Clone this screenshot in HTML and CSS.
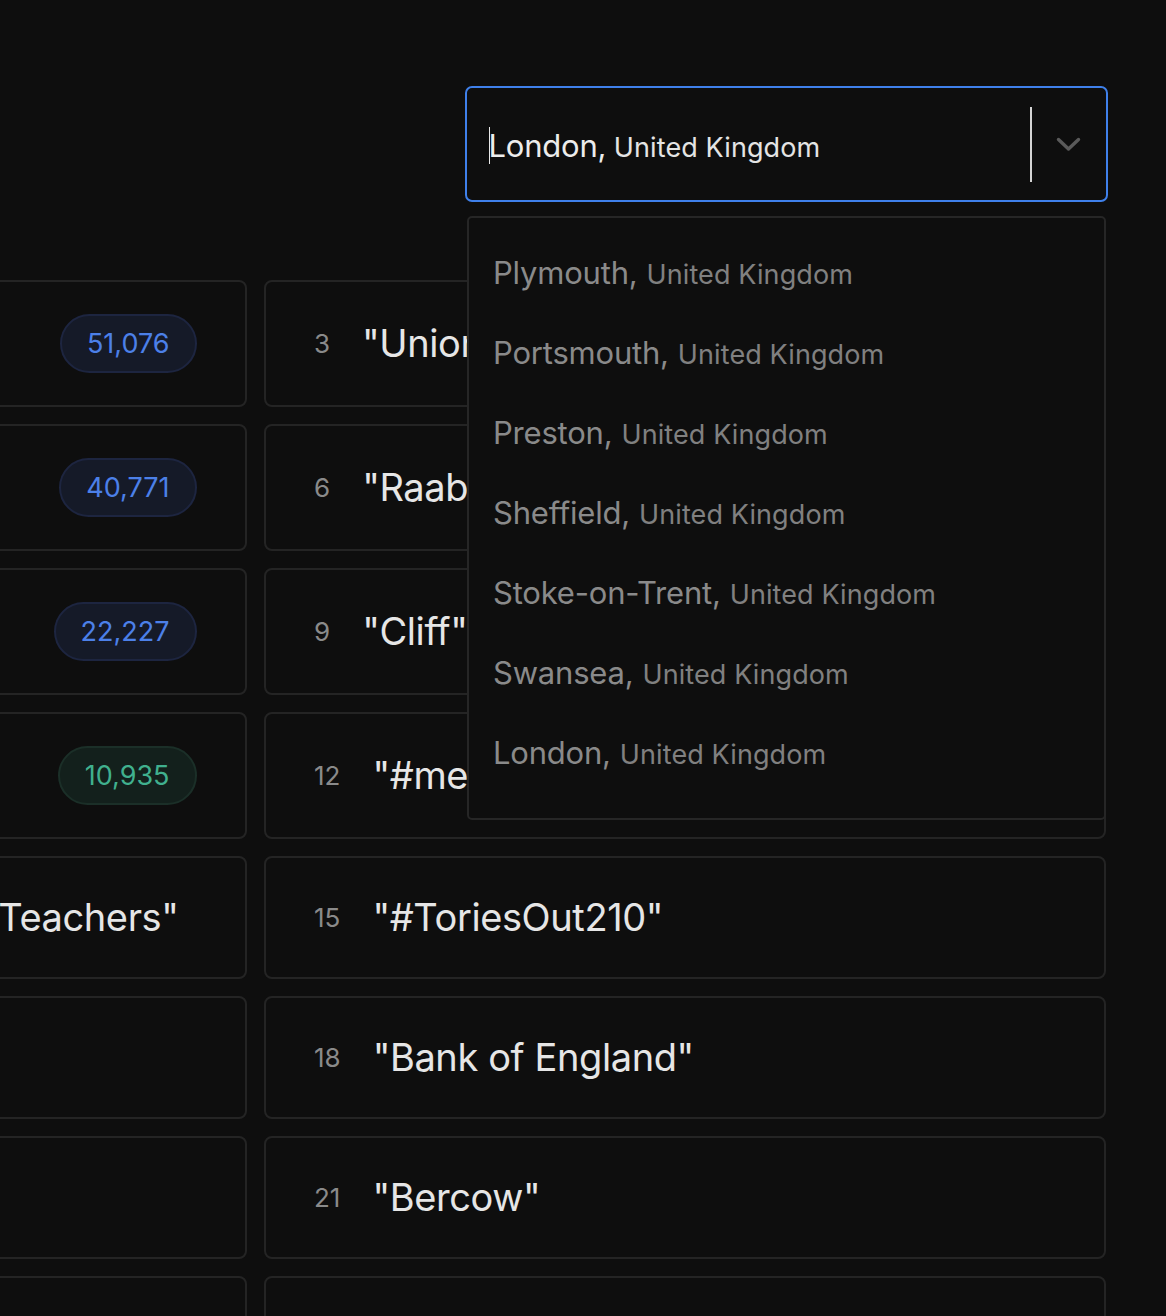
FILE: index.html
```html
<!DOCTYPE html>
<html lang="en">
<head>
<meta charset="utf-8">
<title>Trending terms</title>
<link rel="stylesheet" href="styles.css">
</head>
<body>
<div class="page">
  <div class="top">
    <div class="select-wrap">
      <div class="select">
        <div class="value"><span class="caret"></span><span class="city">London,</span> <span class="country">United Kingdom</span></div>
        <div class="sep"></div>
        <div class="chev">
          <svg width="25" height="15" viewBox="0 0 25 15"><polyline points="2.5,2.5 12.5,12 22.5,2.5" fill="none" stroke="#5a5a5a" stroke-width="3.4" stroke-linecap="round" stroke-linejoin="round"/></svg>
        </div>
      </div>
      <ul class="menu">
        <li><span class="city">Plymouth,</span> <span class="country">United Kingdom</span></li>
        <li><span class="city">Portsmouth,</span> <span class="country">United Kingdom</span></li>
        <li><span class="city">Preston,</span> <span class="country">United Kingdom</span></li>
        <li><span class="city">Sheffield,</span> <span class="country">United Kingdom</span></li>
        <li><span class="city">Stoke-on-Trent,</span> <span class="country">United Kingdom</span></li>
        <li><span class="city">Swansea,</span> <span class="country">United Kingdom</span></li>
        <li><span class="city">London,</span> <span class="country">United Kingdom</span></li>
      </ul>
    </div>
  </div>

  <div class="grid">
    <div class="card tall left"><span class="rank">2</span><span class="term">"Brexit"</span><span class="pill blue">51,076</span></div>
    <div class="card tall"><span class="rank">3</span><span class="term">"Union Jack"</span><span class="pill blue">48,210</span></div>

    <div class="card tall left"><span class="rank">5</span><span class="term">"Boris"</span><span class="pill blue">40,771</span></div>
    <div class="card tall"><span class="rank">6</span><span class="term">"Raab"</span><span class="pill blue">31,554</span></div>

    <div class="card tall left"><span class="rank">8</span><span class="term">"Cummings"</span><span class="pill blue">22,227</span></div>
    <div class="card tall"><span class="rank">9</span><span class="term">"Cliff"</span><span class="pill green">18,402</span></div>

    <div class="card tall left"><span class="rank">11</span><span class="term">"Brighton"</span><span class="pill green">10,935</span></div>
    <div class="card tall"><span class="rank">12</span><span class="term">"#metoo"</span><span class="pill green">10,118</span></div>

    <div class="card left plain"><span class="rank">14</span><span class="term">"Teachers"</span></div>
    <div class="card"><span class="rank">15</span><span class="term">"#ToriesOut210"</span></div>

    <div class="card left"></div>
    <div class="card"><span class="rank">18</span><span class="term">"Bank of England"</span></div>

    <div class="card left"></div>
    <div class="card"><span class="rank">21</span><span class="term">"Bercow"</span></div>

    <div class="card left"></div>
    <div class="card"></div>
  </div>
</div>
</body>
</html>
```

FILE: styles.css
```css
* { box-sizing: border-box; }

html, body {
  margin: 0;
  padding: 0;
  background: #0e0e0e;
  height: 1316px;
  overflow: hidden;
}

body {
  font-family: Inter, "Noto Sans", "Liberation Sans", sans-serif;
  color: #e6e6e6;
}

.page {
  width: 1166px;
}

.top {
  display: flex;
  justify-content: flex-end;
  padding: 86px 58px 0 0;
}

.select-wrap {
  position: relative;
  width: 643px;
}

.select {
  height: 116px;
  border: 2px solid #3f80ea;
  border-radius: 7px;
  display: flex;
  align-items: center;
  background: #0e0e0e;
}

.value {
  flex: 1;
  padding-left: 22px;
  padding-top: 2px;
  white-space: nowrap;
}

.caret {
  display: inline-block;
  width: 0;
  height: 37px;
  border-left: 1.5px solid #e8e8e8;
  vertical-align: -7px;
  margin-right: -1.5px;
}

.city {
  font-size: 31px;
  letter-spacing: -0.2px;
}

.country {
  font-size: 27px;
  letter-spacing: 0.1px;
}

.value .city { color: #ececec; margin-right: 3px; }
.value .country { color: #e4e4e4; }

.sep {
  width: 2px;
  height: 75px;
  background: #d4d4d4;
}

.chev {
  width: 74px;
  display: flex;
  justify-content: center;
  align-items: center;
  padding-right: 2px;
}

.menu {
  position: absolute;
  z-index: 5;
  left: 2px;
  right: 2px;
  top: 130px;
  margin: 0;
  padding: 14px 0 26px;
  list-style: none;
  background: #0e0e0e;
  border: 2px solid #262626;
  border-radius: 5px;
}

.menu li {
  height: 80px;
  display: flex;
  align-items: center;
  gap: 9px;
  padding-left: 24px;
  white-space: nowrap;
}

.menu .city { color: #8a8a8a; }
.menu .country { color: #808080; padding-top: 5px; }

.grid {
  margin-top: 78px;
  margin-left: -596px;
  display: grid;
  grid-template-columns: 842.5px 842px;
  column-gap: 17.5px;
  row-gap: 17px;
}

.card {
  height: 123px;
  border: 2px solid #242424;
  border-radius: 8px;
  display: flex;
  align-items: center;
  padding: 0 48px 0 48px;
  gap: 32px;
  background: #0e0e0e;
}

.card.tall {
  height: 127px;
}

.card.left {
  justify-content: flex-end;
}

.card.left.plain {
  padding-right: 66px;
}

.rank {
  font-size: 26px;
  color: #8a8a8a;
}

.term {
  font-size: 38px;
  color: #e6e6e6;
  letter-spacing: -0.4px;
  white-space: nowrap;
  padding-bottom: 2px;
}

.pill {
  margin-left: auto;
  height: 59px;
  padding: 0 25px;
  border-radius: 30px;
  font-size: 27px;
  display: flex;
  align-items: center;
}

.pill.blue {
  background: #151a28;
  border: 2px solid #1d2540;
  color: #4c80e8;
}

.pill.green {
  background: #13201c;
  border: 2px solid #1b2f28;
  color: #40b08e;
}
```
